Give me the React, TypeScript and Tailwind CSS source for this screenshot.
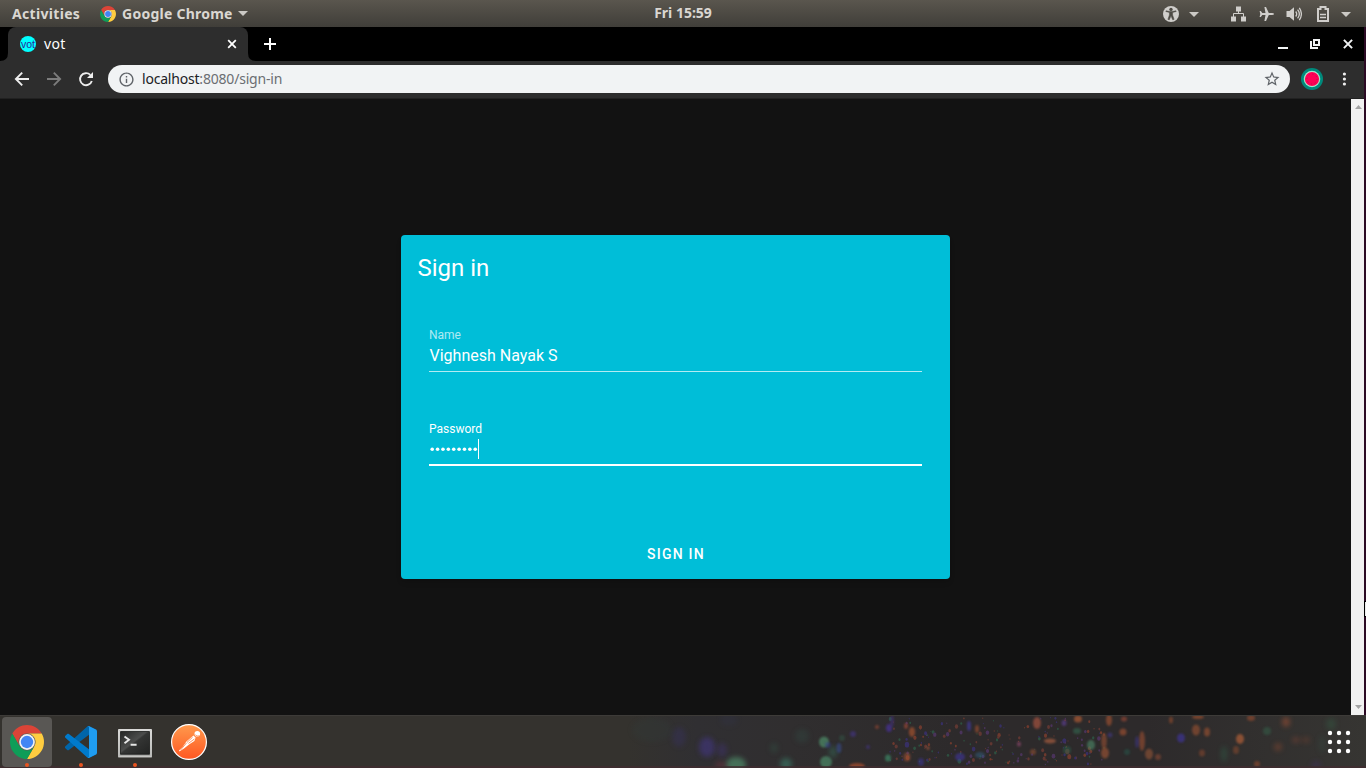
import React from 'react';
import { MdStarBorder, MdInfoOutline } from 'react-icons/md';

function ChromeLogo({ className }: { className: string }) {
  return (
    <svg viewBox="2 2 44 44" className={className}>
      <path fill="#db4437" d="M43.05 13A22 22 0 0 0 4.95 13L14.47 29.5A11 11 0 0 1 24 13Z" />
      <path fill="#ffcd40" d="M43.05 13A22 22 0 0 1 24 46L33.53 29.5A11 11 0 0 0 24 13Z" />
      <path fill="#0f9d58" d="M24 46A22 22 0 0 1 4.95 13L14.47 29.5A11 11 0 0 0 33.53 29.5Z" />
      <circle cx="24" cy="24" r="10.2" fill="#f1f1f1" />
      <circle cx="24" cy="24" r="8" fill="#4285f4" />
    </svg>
  );
}

function CodeLogo() {
  return (
    <svg viewBox="0 0 100 100" className="size-8">
      <path fill="#0065a9" d="M96.46 10.8L75.86.88C73.47-.27 70.62.21 68.75 2.08L1.3 63.58c-1.81 1.65-1.81 4.51 0 6.16l5.51 5.01c1.49 1.35 3.72 1.45 5.32.24l81.23-61.62C96.09 11.3 100 13.25 100 16.67v-.24c0-2.4-1.38-4.59-3.54-5.63Z" />
      <path fill="#007acc" d="M96.46 89.2l-20.6 9.92c-2.39 1.15-5.24.67-7.11-1.2L1.3 36.42c-1.81-1.66-1.81-4.51 0-6.17l5.51-5c1.49-1.35 3.72-1.45 5.32-.24l81.23 61.62c2.73 2.07 6.64.12 6.64-3.3v.24c0 2.4-1.38 4.59-3.54 5.63Z" />
      <path fill="#1f9cf0" d="M75.86 99.13c-2.39 1.14-5.24.66-7.11-1.21 2.31 2.3 6.25.67 6.25-2.59V4.67c0-3.26-3.94-4.9-6.25-2.59 1.87-1.87 4.72-2.36 7.11-1.21l20.6 9.91c2.16 1.04 3.54 3.23 3.54 5.63v67.18c0 2.4-1.38 4.59-3.54 5.63Z" />
    </svg>
  );
}

function TerminalLogo() {
  return (
    <svg viewBox="0 0 34 29" className="h-[29px] w-[34px]">
      <defs>
        <linearGradient id="screen" x1="0" y1="0" x2="1" y2="1">
          <stop offset="0" stopColor="#252625" />
          <stop offset=".45" stopColor="#4c4d4c" />
          <stop offset=".5" stopColor="#343534" />
          <stop offset="1" stopColor="#222322" />
        </linearGradient>
        <linearGradient id="frame" x1="0" y1="0" x2="0" y2="1">
          <stop offset="0" stopColor="#eeeeec" />
          <stop offset="1" stopColor="#a7a8a5" />
        </linearGradient>
      </defs>
      <rect x="0" y="0" width="34" height="28.6" rx="1.2" fill="url(#frame)" />
      <rect x="1" y="1" width="32" height="26.6" fill="none" stroke="#c8c8c6" />
      <rect x="2.6" y="2.6" width="28.8" height="22.6" fill="url(#screen)" stroke="#161716" strokeWidth=".8" />
      <path d="M6.5 7.4L11 10.8L6.5 14.2M12.6 15.8H18.6" fill="none" stroke="#e6e6e6" strokeWidth="1.9" />
    </svg>
  );
}

function PostmanLogo() {
  return (
    <svg viewBox="0 0 36 36" className="size-9">
      <defs>
        <linearGradient id="orange" x1="0" y1="0" x2="0" y2="1">
          <stop offset="0" stopColor="#ff9a4d" />
          <stop offset="1" stopColor="#ff5722" />
        </linearGradient>
      </defs>
      <circle cx="18" cy="18" r="17.4" fill="url(#orange)" stroke="#fff" strokeWidth="1.2" />
      <circle cx="26.3" cy="9.7" r="2.8" fill="#fff" />
      <path d="M24.3 10.8q1.8 1.8 4 1" fill="none" stroke="#ff7b3c" strokeWidth=".7" />
      <path d="M22.4 11.6L24.6 13.4L23.4 17L18.4 20.2L13 24.6L8.4 27.6L8 26.6L11.6 23L15.4 17.4Z" fill="#fff" />
      <path d="M21.6 13.2L16 18.4M23.4 15L17.4 19.4M15.6 18.8L9.4 26.2" stroke="#ff7838" strokeWidth=".8" />
    </svg>
  );
}

function Caret() {
  return (
    <svg viewBox="0 0 10 5" className="h-[5px] w-[10px] shrink-0">
      <path d="M0 0H10L5 5Z" fill="#cbc9c5" />
    </svg>
  );
}

function TopBar() {
  return (
    <header className="flex h-[27px] shrink-0 items-center bg-linear-to-b from-[#5a564e] to-[#403e39] font-['Noto_Sans',sans-serif] text-[14px] font-bold text-[#dad7d2]">
      <div className="flex w-[634px] items-center pl-3">
        <span className="w-[88px] tracking-[0.32px]">Activities</span>
        <ChromeLogo className="size-4" />
        <span className="ml-[6px] w-[116px] tracking-[0.25px]">Google Chrome</span>
        <Caret />
      </div>
      <div className="w-[98px] whitespace-nowrap pb-[2px] text-center text-[14px]">Fri 15:59</div>
      <div className="flex flex-1 items-center pl-[431px]">
        <svg viewBox="0 0 16 16" className="size-4">
          <circle cx="8" cy="8" r="8" fill="#d0cecb" />
          <circle cx="8" cy="3.4" r="1.7" fill="#4d4a44" />
          <path d="M2.8 5.5L6.4 6.4V9L4.9 13.4L6.3 13.8L8 9.8L9.7 13.8L11.1 13.4L9.6 9V6.4L13.2 5.5L13 4.8L9 5.5H7L3 4.8Z" fill="#4d4a44" stroke="#4d4a44" strokeWidth=".5" />
        </svg>
        <div className="ml-[10px] mt-px"><Caret /></div>
        <svg viewBox="0 0 16 16" className="ml-8 size-4" fill="#d0cecb">
          <path d="M5 .5h5v5H5zM0 10.5h5v5H0zM10 10.5h5v5h-5z" />
          <path d="M7.5 5v3M2.5 11V7.5h10V11" fill="none" stroke="#d0cecb" strokeWidth="1" />
        </svg>
        <svg viewBox="0 0 16 16" className="ml-3 size-4" fill="#d0cecb">
          <path d="M15 8q0-1-2-1.1H9.8L7 1H5.4L6.5 6.9H3.3L1.8 5H.6L1.3 8L.6 11H1.8L3.3 9.1H6.5L5.4 15H7L9.8 9.1H13q2-.1 2-1.1Z" />
        </svg>
        <svg viewBox="0 0 16 16" className="ml-[11px] mr-px size-4" fill="#d0cecb">
          <path d="M.5 5h3L8 1.2v13.6L3.5 11h-3Z" />
          <path d="M9.7 5.5q2 2.5 0 5M11.6 3.6q3.5 4.4 0 8.8M13.3 1.8q4.2 6.2 0 12.4" fill="none" stroke="#d0cecb" strokeWidth="1.3" />
        </svg>
        <svg viewBox="0 0 16 16" className="ml-3 size-4">
          <path d="M3 3H5.5V1H10.5V3H13V15H3Z" fill="none" stroke="#d0cecb" strokeWidth="2" />
          <path d="M5 8.5h6M5 11.5h6" stroke="#d0cecb" strokeWidth="1.4" />
        </svg>
        <div className="ml-[10px] mt-px"><Caret /></div>
      </div>
    </header>
  );
}

function TabStrip() {
  return (
    <div className="flex h-[34px] shrink-0 bg-black text-white">
      <svg viewBox="0 0 8 34" className="h-[34px] w-2"><path d="M8 26V34H0Q8 34 8 26Z" fill="#2d2d2d" /></svg>
      <div className="flex w-[240px] items-center rounded-t-lg bg-[#2d2d2d] pl-3 pr-[11px]">
        <div className="flex size-4 items-center justify-center overflow-hidden rounded-full bg-[#00ffff] font-['Liberation_Sans',sans-serif] text-[10.5px] leading-none text-[#2a2596]">vot</div>
        <span className="ml-2 flex-1 font-['Noto_Sans',sans-serif] text-[14px] leading-5 tracking-[0.3px]">vot</span>
        <svg viewBox="0 0 10 10" className="size-[10px]"><path d="M1.2 1.2L8.8 8.8M8.8 1.2L1.2 8.8" stroke="#fff" strokeWidth="1.8" /></svg>
      </div>
      <svg viewBox="0 0 8 34" className="h-[34px] w-2"><path d="M0 26V34H8Q0 34 0 26Z" fill="#2d2d2d" /></svg>
      <div className="flex flex-1 items-center">
        <svg viewBox="0 0 12 12" className="ml-2 size-3"><path d="M6 0V12M0 6H12" stroke="#fff" strokeWidth="2" /></svg>
        <div className="flex-1" />
        <svg viewBox="0 0 10 10" className="mr-[22px] size-[10px]"><path d="M0 9H10" stroke="#f1f3f4" strokeWidth="2" /></svg>
        <svg viewBox="0 0 10 10" className="mr-[23px] size-[10px]"><path d="M4 1H9V6H4ZM1 2V9H8" fill="none" stroke="#f1f3f4" strokeWidth="2" /></svg>
        <svg viewBox="0 0 10 10" className="mr-[11px] size-[10px]"><path d="M.9.9L9.1 9.1M9.1.9L.9 9.1" stroke="#f1f3f4" strokeWidth="2" /></svg>
      </div>
    </div>
  );
}

function Toolbar() {
  return (
    <div className="flex h-[38px] shrink-0 items-center border-b border-[#212121] bg-[#2d2d2d] pb-px pl-3">
      <svg viewBox="0 0 20 20" className="size-5" fill="none" stroke="#eeeeee" strokeWidth="1.9">
        <path d="M17 10H4.5M10.2 3.7L3.9 10L10.2 16.3" />
      </svg>
      <svg viewBox="0 0 20 20" className="ml-3 size-5" fill="none" stroke="#7c7c7c" strokeWidth="1.9">
        <path d="M3 10H15.5M9.8 3.7L16.1 10L9.8 16.3" />
      </svg>
      <svg viewBox="0 0 20 20" className="ml-3 size-5" fill="none" stroke="#eeeeee" strokeWidth="1.9">
        <path d="M14.3 5.9A6 6 0 1 0 15.8 12" />
        <path d="M17 3V9H11Z" fill="#eeeeee" stroke="none" />
      </svg>
      <div className="ml-3 flex h-7 w-[1182px] items-center rounded-full bg-[#f1f3f4] pl-[10px] pr-[9px]">
        <MdInfoOutline className="size-[17px] text-[#5f6368]" />
        <span className="ml-[7px] flex-1 pb-[2px] font-['Noto_Sans',sans-serif] text-[14px] tracking-[-0.2px] text-[#6b6e72]">
          <span className="text-[#202124]">localhost</span>:8080/sign-in
        </span>
        <MdStarBorder className="size-[18px] text-[#5f6368]" />
      </div>
      <svg viewBox="0 0 22 22" className="ml-[11px] size-[22px]">
        <circle cx="11" cy="11" r="11" fill="#00897b" />
        <circle cx="11" cy="11" r="8.3" fill="#7cdcbb" />
        <circle cx="11" cy="11" r="7.7" fill="#b5edd6" />
        <circle cx="11" cy="11" r="7.1" fill="#ff0055" />
        <circle cx="11" cy="11" r="5" fill="none" stroke="#b3124e" strokeWidth="1" strokeDasharray="1 2.9" />
      </svg>
      <svg viewBox="0 0 4 14" className="ml-[19px] h-[14px] w-1" fill="#eeeeee">
        <circle cx="2.4" cy="2" r="1.6" /><circle cx="2.4" cy="7" r="1.6" /><circle cx="2.4" cy="12" r="1.6" />
      </svg>
    </div>
  );
}

function SignInCard() {
  return (
    <form className="flex h-[344px] w-[549px] flex-col rounded bg-[#00bed8] font-[Roboto,sans-serif] text-white shadow-md">
      <h1 className="pl-[16.5px] pt-[17px] text-2xl leading-8">Sign in</h1>
      <div className="mx-7 mt-[42px] flex h-[46px] flex-col border-b border-white/70">
        <label className="text-xs leading-[18px] text-white/70">Name</label>
        <span className="pl-[0.5px] text-base leading-6">Vighnesh Nayak S</span>
      </div>
      <div className="mx-7 mt-12 flex h-[46px] flex-col border-b-2 border-white">
        <label className="text-xs leading-[18px]">Password</label>
        <div className="mt-px flex h-5 items-center">
          <svg viewBox="0 0 49 20" className="h-5 w-[49px]" fill="#fff">
            {Array.from({ length: 9 }, (_, i) => (
              <circle key={i} cx={3.2 + i * 5.38} cy="10.3" r="1.8" />
            ))}
          </svg>
          <div className="h-5 w-px bg-white" />
        </div>
      </div>
      <div className="mt-[70px] pl-px text-center text-sm font-medium leading-9 tracking-[1.25px]">SIGN IN</div>
    </form>
  );
}

const blobs: [number, number, number, number, string, number, number][] = [
  [679, 737, 7, 10, '#383365', 0.5, 3],
  [707, 747, 8, 10, '#403477', 0.9, 2],
  [722, 750, 5, 7, '#403270', 0.6, 3],
  [729, 720, 9, 6, '#303552', 0.3, 3],
  [652, 730, 20, 12, '#303d3b', 0.35, 6],
  [736, 765, 10, 8, '#4f8e6b', 0.9, 2],
  [721, 766, 6, 5, '#793643', 0.5, 2],
  [774, 748, 4, 5, '#305245', 0.5, 2],
  [786, 764, 6, 6, '#3b7a67', 0.8, 2],
  [802, 736, 7, 7, '#304a42', 0.5, 2],
  [824, 742, 5, 5.5, '#4e8b68', 0.95, 1],
  [828, 745, 3, 3, '#353995', 0.6, 1],
  [826, 762, 6, 6, '#4c8766', 0.95, 1],
  [833, 752, 4, 6, '#356855', 0.7, 2],
  [839, 748, 2.5, 5, '#374c8d', 0.8, 1],
  [842, 738, 3, 3, '#305c4a', 0.6, 1],
  [853, 734, 3, 3, '#463491', 0.7, 1],
  [857, 766, 8, 3, '#bf542e', 0.8, 1],
  [889, 728, 3, 4, '#473292', 1, 1],
  [892, 721, 2, 6, '#443183', 0.7, 1],
  [877, 727, 2, 2, '#9c4934', 0.8, 1],
  [868, 747, 2, 2, '#433487', 0.8, 1],
  [906, 726, 2, 3, '#9f4936', 0.9, 1],
  [912, 732, 3.2, 5, '#a6532f', 0.9, 1],
  [888, 758, 3, 3.5, '#3d8a68', 0.9, 1],
  [907, 757, 3.5, 4.5, '#a65232', 0.7, 1],
  [921, 762, 3, 4, '#3c3597', 0.7, 1],
  [928, 748, 1.5, 2, '#ba6140', 0.8, 1],
  [960, 757, 5, 4, '#41369b', 0.8, 1],
  [969, 726, 2, 5, '#443aab', 0.8, 1],
  [977, 729, 2, 4, '#a25031', 0.8, 1],
  [980, 755, 5, 3, '#315c7c', 0.7, 1],
  [1037, 723, 4, 6, '#9b4f3d', 1, 0.6],
  [1064, 723, 2.5, 3, '#60409a', 0.8, 1],
  [1078, 719, 4, 3.5, '#b15c35', 0.9, 1],
  [1077, 731, 4, 3, '#367b5b', 0.6, 1],
  [1033, 752, 3, 3, '#9c5230', 0.7, 1],
  [1050, 741, 6, 2.5, '#b96543', 0.8, 0.7],
  [1019, 744, 2, 2.5, '#984c73', 0.8, 1],
  [1091, 745, 4, 5, '#4a8062', 0.9, 1],
  [1109, 720, 3, 6, '#a85431', 0.8, 1],
  [1104, 741, 2.8, 8, '#955031', 0.8, 1],
  [1105, 753, 4, 5.5, '#a45736', 0.8, 1],
  [1124, 719, 3, 2.5, '#9f4935', 0.8, 1],
  [1123, 732, 3.5, 3.5, '#a75333', 0.8, 1],
  [1110, 735, 2.5, 2.5, '#443a8d', 0.7, 1],
  [1142, 741, 3, 10, '#9b4f33', 0.8, 1],
  [1149, 754, 4, 5.5, '#a35b39', 0.7, 1],
  [1158, 757, 3, 3, '#944e35', 0.7, 1],
  [1137, 742, 2, 6, '#42399a', 0.6, 1],
  [1181, 738, 4, 4.5, '#4135a4', 0.8, 1],
  [1171, 720, 2, 3.5, '#a1512f', 0.7, 1],
  [1196, 730, 4, 5.5, '#a85632', 0.7, 1],
  [1207, 732, 3, 4.5, '#ae5932', 0.7, 1],
  [1198, 717, 6, 2, '#a6522f', 0.8, 1],
  [1202, 753, 3, 3.5, '#9c4d2e', 0.6, 1],
  [1224, 754, 3, 8, '#2d684d', 0.5, 2],
  [1240, 739, 4, 5, '#b46137', 0.9, 1],
  [1236, 750, 3, 4, '#9a502d', 0.6, 1],
  [1251, 718, 4, 3, '#a34f2d', 0.7, 1],
  [1267, 731, 4, 4, '#355f48', 0.7, 1],
  [1286, 722, 4, 5, '#985036', 0.8, 2],
  [1257, 764, 3, 3, '#9c4e2e', 0.7, 1],
  [1278, 747, 4, 4, '#8d4931', 0.6, 2],
  [1296, 740, 4, 3, '#844435', 0.6, 2],
  [1306, 740, 4, 3, '#73402f', 0.6, 2],
  [1316, 765, 5, 4, '#41305e', 0.6, 2],
  [1331, 724, 5, 6, '#345843', 0.6, 2],
  [1322, 744, 3, 9, '#354b42', 0.5, 2],
  [1067, 750, 4, 4, '#2b6850', 0.6, 1],
  [1127, 752, 3, 3, '#286051', 0.6, 1],
];

function noise(n: number) {
  const v = Math.sin(n * 12.9898) * 43758.5453;
  return v - Math.floor(v);
}

const specks = Array.from({ length: 190 }, (_, i) => ({
  x: 890 + noise(i + 1) * 215,
  y: 717 + noise(i + 301) * 48,
  r: 0.5 + noise(i + 701) * noise(i + 71) * 2,
  c: ['#8a402e', '#3b317b', '#743c34', '#2d6048', '#57376e'][i % 5],
}));

function Wallpaper() {
  return (
    <svg viewBox="0 715 1366 53" preserveAspectRatio="none" className="absolute inset-0 size-full">
      <defs>
        <linearGradient id="dusk">
          <stop offset="0" stopColor="#34322e" />
          <stop offset=".46" stopColor="#34322e" />
          <stop offset=".51" stopColor="#302f32" />
          <stop offset=".58" stopColor="#302e2f" />
          <stop offset=".7" stopColor="#2d2a2b" />
          <stop offset=".84" stopColor="#2d2a2b" />
          <stop offset="1" stopColor="#363532" />
        </linearGradient>
        <filter id="soft1" x="-100%" y="-100%" width="300%" height="300%"><feGaussianBlur stdDeviation="1.1" /></filter>
        <filter id="soft2" x="-100%" y="-100%" width="300%" height="300%"><feGaussianBlur stdDeviation="2.4" /></filter>
        <filter id="fine"><feGaussianBlur stdDeviation=".6" /></filter>
      </defs>
      <rect y="715" width="1366" height="53" fill="url(#dusk)" />
      <g opacity=".7" filter="url(#fine)">
        {specks.map((s, i) => <ellipse key={i} cx={s.x} cy={s.y} rx={s.r} ry={s.r * 1.3} fill={s.c} />)}
      </g>
      {blobs.map(([x, y, rx, ry, fill, o, b], i) => (
        <ellipse key={i} cx={x} cy={y} rx={rx} ry={ry} fill={fill} opacity={o * 0.76} filter={b > 1 ? 'url(#soft2)' : 'url(#soft1)'} />
      ))}
      <path d="M0 715.5H1366" stroke="#3d3b38" />
      <path d="M0 767H1366" stroke="#412c30" strokeWidth="2" opacity=".75" />
    </svg>
  );
}

function DockItem({ active, running, children }: { active?: boolean; running?: boolean; children: React.ReactNode }) {
  return (
    <div className={`relative flex h-[50px] w-[50px] items-center justify-center rounded ${active ? 'bg-[#595754]' : ''}`}>
      {children}
      {running && <div className="absolute bottom-0 left-[23px] size-1 rounded-full bg-[#e95420]" />}
    </div>
  );
}

function Dock() {
  return (
    <footer className="relative flex h-[53px] shrink-0 overflow-hidden bg-[#34322e]">
      <Wallpaper />
      <nav className="relative flex flex-1 gap-1 pl-[2px] pt-[2px]">
        <DockItem active running><ChromeLogo className="size-[34px]" /></DockItem>
        <DockItem running><CodeLogo /></DockItem>
        <DockItem running><div className="pt-[2px]"><TerminalLogo /></div></DockItem>
        <DockItem><PostmanLogo /></DockItem>
      </nav>
      <div className="relative flex w-[39px] items-center">
        <svg viewBox="0 0 24 24" className="size-6" fill="#fff">
          {[3, 12, 21].map((y) => [3, 12, 21].map((x) => <circle key={`${x}-${y}`} cx={x} cy={y} r="2.2" />))}
        </svg>
      </div>
    </footer>
  );
}

export default function App() {
  return (
    <div className="flex h-[768px] w-[1366px] flex-col overflow-hidden bg-[#121212]">
      <TopBar />
      <div className="flex min-h-0 flex-1">
        <div className="flex w-[1364px] flex-col">
          <TabStrip />
          <Toolbar />
          <div className="flex min-h-0 flex-1">
            <main className="flex flex-1 justify-center bg-[#121212] pt-[136px]"><SignInCard /></main>
            <div className="flex w-[13px] flex-col items-center justify-between bg-[#f1f1f1] pb-[6px] pl-[2px] pt-[6px]">
              <svg viewBox="0 0 7 4" className="h-1 w-[7px]"><path d="M0 4H7L3.5 0Z" fill="#a3a3a3" /></svg>
              <svg viewBox="0 0 7 4" className="h-1 w-[7px]"><path d="M0 0H7L3.5 4Z" fill="#a3a3a3" /></svg>
            </div>
          </div>
        </div>
        <div className="w-[2px] bg-[#2c0a24] pt-[574px]">
          <div className="h-4 border-y border-l border-black bg-[#eeeeee]" />
        </div>
      </div>
      <Dock />
    </div>
  );
}
